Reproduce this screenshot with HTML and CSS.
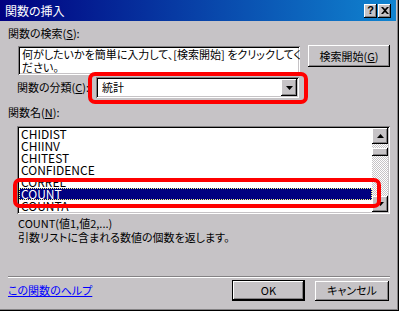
FILE: index.html
```html
<!DOCTYPE html>
<html lang="ja">
<head>
  <meta charset="UTF-8">
  <title>関数の挿入</title>
  <link rel="stylesheet" href="styles.css">
</head>
<body>
  <div class="window">
    <!-- title bar with help / close buttons -->
    <div class="titlebar">
      <span class="title">関数の挿入</span>
      <div class="caption-btns">
        <span class="cbtn help">?</span>
        <span class="cbtn close">
          <svg width="8" height="7" viewBox="0 0 8 7"><path d="M0 0h2l2 2 2-2h2L5 3.5 8 7H6L4 5 2 7H0l3-3.5z" fill="#000"/></svg>
        </span>
      </div>
    </div>

    <div class="content">
      <div class="lbl lbl-search">関数の検索(<u>S</u>):</div>
      <div class="search-row">
        <div class="textbox">何がしたいかを簡単に入力して、[検索開始] をクリックしてく<br>ださい。</div>
        <div class="btn btn-search">検索開始(<u>G</u>)</div>
      </div>

      <div class="cat-row">
        <span class="lbl lbl-cat">関数の分類(<u>C</u>):</span>
        <div class="combo">
          <span class="combo-value">統計</span>
          <span class="drop">
            <svg width="7" height="4" viewBox="0 0 7 4"><path d="M0 0h7L3.5 4z" fill="#000"/></svg>
          </span>
        </div>
      </div>

      <div class="lbl lbl-name">関数名(<u>N</u>):</div>
      <div class="listbox">
        <ul class="items">
          <li>CHIDIST</li>
          <li>CHIINV</li>
          <li>CHITEST</li>
          <li>CONFIDENCE</li>
          <li>CORREL</li>
          <li class="selected">COUNT</li>
          <li>COUNTA</li>
        </ul>
        <div class="scrollbar">
          <span class="sbtn">
            <svg width="7" height="4" viewBox="0 0 7 4"><path d="M0 4h7L3.5 0z" fill="#000"/></svg>
          </span>
          <div class="track"><span class="thumb" style="margin-top: 4px"></span></div>
          <span class="sbtn">
            <svg width="7" height="4" viewBox="0 0 7 4"><path d="M0 0h7L3.5 4z" fill="#000"/></svg>
          </span>
        </div>
      </div>

      <div class="syntax">COUNT(値1,値2,...)</div>
      <div class="desc">引数リストに含まれる数値の個数を返します。</div>

      <div class="sep"></div>

      <div class="footer">
        <a class="help-link" href="#">この関数のヘルプ</a>
        <div class="btn btn-ok">OK</div>
        <div class="btn btn-cancel">キャンセル</div>
      </div>
    </div>

    <!-- red annotation marks drawn over the dialog -->
    <div class="mark mark-combo"></div>
    <div class="mark mark-list"></div>
  </div>
</body>
</html>
```

FILE: styles.css
```css
/* classic win98 dialog */
body {
  margin: 0;
  background: #c6c3c6;
  font: 11px/15px "Noto Sans CJK JP", sans-serif;
  font-feature-settings: "palt";
  color: #000;
}
.window {
  position: relative;
  width: 399px;
  height: 311px;
  box-sizing: border-box;
  padding: 0 3px 3px 0;
  background: #c6c3c6;
  box-shadow: inset -1px -1px #000, inset -2px -2px #848284;
  display: flex;
  flex-direction: column;
}

/* title bar */
.titlebar {
  height: 21px;
  display: flex;
  align-items: center;
  padding-left: 5px;
  background: linear-gradient(90deg, #000080, #1084d0);
  color: #fff;
  font-size: 12px;
}
.caption-btns {
  margin-left: auto;
  margin-right: 5px;
  display: flex;
  gap: 1px;
}
.cbtn {
  width: 13px;
  height: 14px;
  box-sizing: border-box;
  display: flex;
  align-items: center;
  justify-content: center;
  background: #c6c3c6;
  color: #000;
  font: bold 11px/1 "Liberation Sans", sans-serif;
  box-shadow: inset -1px -1px #000, inset 1px 1px #fff, inset -2px -2px #848284;
}

/* content area */
.content {
  display: flex;
  flex-direction: column;
}
.lbl u, .btn u {
  text-decoration: underline;
}
.lbl-search {
  margin: 5px 0 0 8px;
}
.search-row {
  display: flex;
  align-items: flex-start;
  gap: 8px;
  margin: 5px 0 0 18px;
}
.textbox {
  width: 282px;
  height: 29px;
  box-sizing: border-box;
  padding: 2px 0 0 4px;
  line-height: 13px;
  background: #fff;
  white-space: nowrap;
  overflow: hidden;
}
.textbox, .combo, .listbox {
  box-shadow: inset 1px 1px #848284, inset -1px -1px #fff, inset 2px 2px #000, inset -2px -2px #c6c3c6;
}

/* raised buttons */
.btn {
  box-sizing: border-box;
  display: flex;
  align-items: center;
  justify-content: center;
  background: #c6c3c6;
  box-shadow: inset -1px -1px #000, inset 1px 1px #fff, inset -2px -2px #848284;
}
.btn-search {
  width: 82px;
  height: 22px;
  margin-top: -1px;
}

.cat-row {
  display: flex;
  align-items: center;
  margin: 2px 0 0 17px;
}
.lbl-cat {
  width: 79px;
}
.combo {
  width: 203px;
  height: 21px;
  box-sizing: border-box;
  padding: 2px;
  display: flex;
  align-items: center;
  background: #fff;
}
.combo-value {
  padding-left: 4px;
}
.drop {
  margin-left: auto;
  width: 16px;
  height: 17px;
  box-sizing: border-box;
  display: flex;
  align-items: center;
  justify-content: center;
  background: #c6c3c6;
  box-shadow: inset -1px -1px #000, inset 1px 1px #fff, inset -2px -2px #848284;
}

.lbl-name {
  margin: 7px 0 0 8px;
}
.listbox {
  width: 373px;
  height: 88px;
  box-sizing: border-box;
  margin: 6px 0 0 17px;
  padding: 2px;
  display: flex;
  background: #fff;
}
.items {
  flex: 1;
  list-style: none;
  margin: 0;
  padding: 0;
  font-size: 12px;
}
.items li {
  height: 12px;
  line-height: 12px;
  padding-left: 2px;
  white-space: nowrap;
}
.items li.selected {
  background: #000080;
  color: #fff;
  outline: 1px dotted #ffff80;
  outline-offset: -1px;
}
.scrollbar {
  width: 16px;
  display: flex;
  flex-direction: column;
}
.sbtn {
  height: 16px;
  box-sizing: border-box;
  display: flex;
  align-items: center;
  justify-content: center;
  background: #c6c3c6;
  box-shadow: inset -1px -1px #000, inset 1px 1px #fff, inset -2px -2px #848284;
}
.track {
  flex: 1;
  background: repeating-conic-gradient(#fff 0 25%, #c6c3c6 0 50%) 0 0 / 2px 2px;
}
.thumb {
  display: block;
  height: 8px;
  background: #c6c3c6;
  box-shadow: inset -1px -1px #000, inset 1px 1px #fff, inset -2px -2px #848284;
}

.syntax {
  margin: 2px 0 0 18px;
  line-height: 14px;
}
.desc {
  margin-left: 18px;
  line-height: 14px;
}
.sep {
  width: 382px;
  height: 0;
  margin: 32px 0 0 8px;
  border-top: 1px solid #848284;
  border-bottom: 1px solid #fff;
}
.footer {
  width: 381px;
  display: flex;
  align-items: center;
  gap: 10px;
  margin: 2px 0 0 8px;
}
.help-link {
  margin-right: auto;
  color: #0000ff;
  text-decoration: underline;
}
.btn-ok {
  width: 73px;
  height: 21px;
  border: 1px solid #000;
}
.btn-cancel {
  width: 74px;
  height: 20px;
}

/* red annotation rectangles */
.mark {
  position: absolute;
  box-sizing: border-box;
  border: 4px solid #ff0000;
  border-radius: 7px;
}
.mark-combo {
  left: 88px;
  top: 72px;
  width: 220px;
  height: 32px;
}
.mark-list {
  left: 13px;
  top: 178px;
  width: 368px;
  height: 30px;
}
```
